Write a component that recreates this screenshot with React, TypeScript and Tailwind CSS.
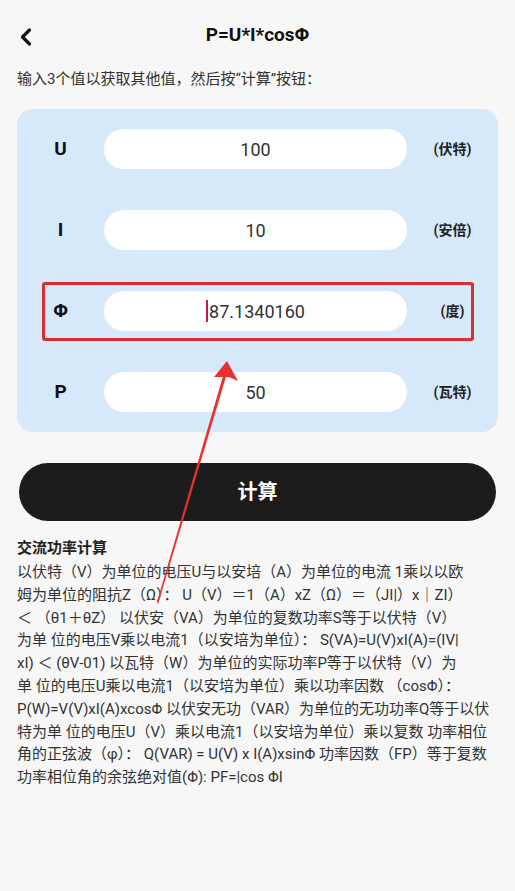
import { ChevronLeft } from "lucide-react"

const rows = [
  { label: "U", value: "100", unit: "(伏特)" },
  { label: "I", value: "10", unit: "(安倍)" },
  { label: "Φ", value: "87.1340160", unit: "(度)", focused: true },
  { label: "P", value: "50", unit: "(瓦特)" },
]

const lines = [
  "以伏特（V）为单位的电压U与以安培（A）为单位的电流 1乘以以欧",
  "姆为单位的阻抗Z（Ω）： U（V）＝1（A）xZ（Ω）＝（JI|）x｜ZI）",
  "＜ （θ1＋θZ） 以伏安（VA）为单位的复数功率S等于以伏特（V）",
  "为单 位的电压V乘以电流1（以安培为单位）： S(VA)=U(V)xI(A)=(IV|",
  "xI) ＜ (θV-01) 以瓦特（W）为单位的实际功率P等于以伏特（V）为",
  "单 位的电压U乘以电流1（以安培为单位）乘以功率因数 （cosΦ）：",
  "P(W)=V(V)xI(A)xcosΦ 以伏安无功（VAR）为单位的无功功率Q等于以伏",
  "特为单 位的电压U（V）乘以电流1（以安培为单位）乘以复数 功率相位",
  "角的正弦波（φ）： Q(VAR) = U(V) x I(A)xsinΦ 功率因数（FP）等于复数",
  "功率相位角的余弦绝对值(Φ): PF=|cos ΦI",
]

export default function App() {
  return (
    <div
      className="relative w-[515px] h-[891px] overflow-hidden bg-[#f7f7f7] text-[#222]"
      style={{ fontFamily: 'Roboto, "Noto Sans CJK SC", sans-serif' }}
    >
      {/* Header */}
      <div className="relative flex items-center justify-center h-[70px]">
        <ChevronLeft className="absolute left-[12px] top-[23px] w-[28px] h-[28px] text-[#111]" strokeWidth={2.75} />
        <h1 className="text-[19px] font-bold text-[#111]">P=U*I*cosΦ</h1>
      </div>

      <p className="px-[17px] text-[15px] leading-[18px] text-[#333]">输入3个值以获取其他值，然后按“计算”按钮：</p>

      {/* Input panel */}
      <div className="mx-[17px] mt-[21px] rounded-[16px] bg-[#d6e9fb] py-[20px] flex flex-col gap-[41px]">
        {rows.map((row) => (
          <div key={row.label} className="grid grid-cols-[87px_303px_1fr] items-center h-[40px]">
            <span className="text-center text-[19px] font-bold text-[#111]">{row.label}</span>
            <div className="h-[40px] rounded-full bg-white flex items-center justify-center text-[18px] text-[#333]">
              {row.focused && <span className="w-[2px] h-[22px] bg-[#c2185b] mr-[1px]" />}
              {row.value}
            </div>
            <span className="text-center text-[14px] font-bold text-[#222]">{row.unit}</span>
          </div>
        ))}
      </div>

      {/* Calculate button */}
      <div className="px-[19px] mt-[31px]">
        <button className="w-full h-[58px] rounded-full bg-[#1c1c1c] text-white text-[20px] font-bold">计算</button>
      </div>

      {/* Description */}
      <div className="px-[17px] mt-[15px]">
        <h2 className="text-[15px] font-bold leading-[24px] text-[#222]">交流功率计算</h2>
        <div className="text-[15px] leading-[22.8px] text-[#333] mt-[1px]">
          {lines.map((l, i) => (
            <div key={i} className="whitespace-nowrap">{l}</div>
          ))}
        </div>
      </div>

      {/* Annotation: red box */}
      <div className="absolute left-[42px] top-[282px] w-[432px] h-[59px] border-[3px] border-[#d9302e] rounded-[3px]" />

      {/* Annotation: arrow */}
      <svg className="absolute left-0 top-0 pointer-events-none" width="515" height="891" viewBox="0 0 515 891">
        <polygon points="226,366 228,370 158,604 157,602" fill="#e8312a" />
        <polygon points="227,361 238,381 229,377 214,377" fill="#e8312a" />
      </svg>
    </div>
  )
}
